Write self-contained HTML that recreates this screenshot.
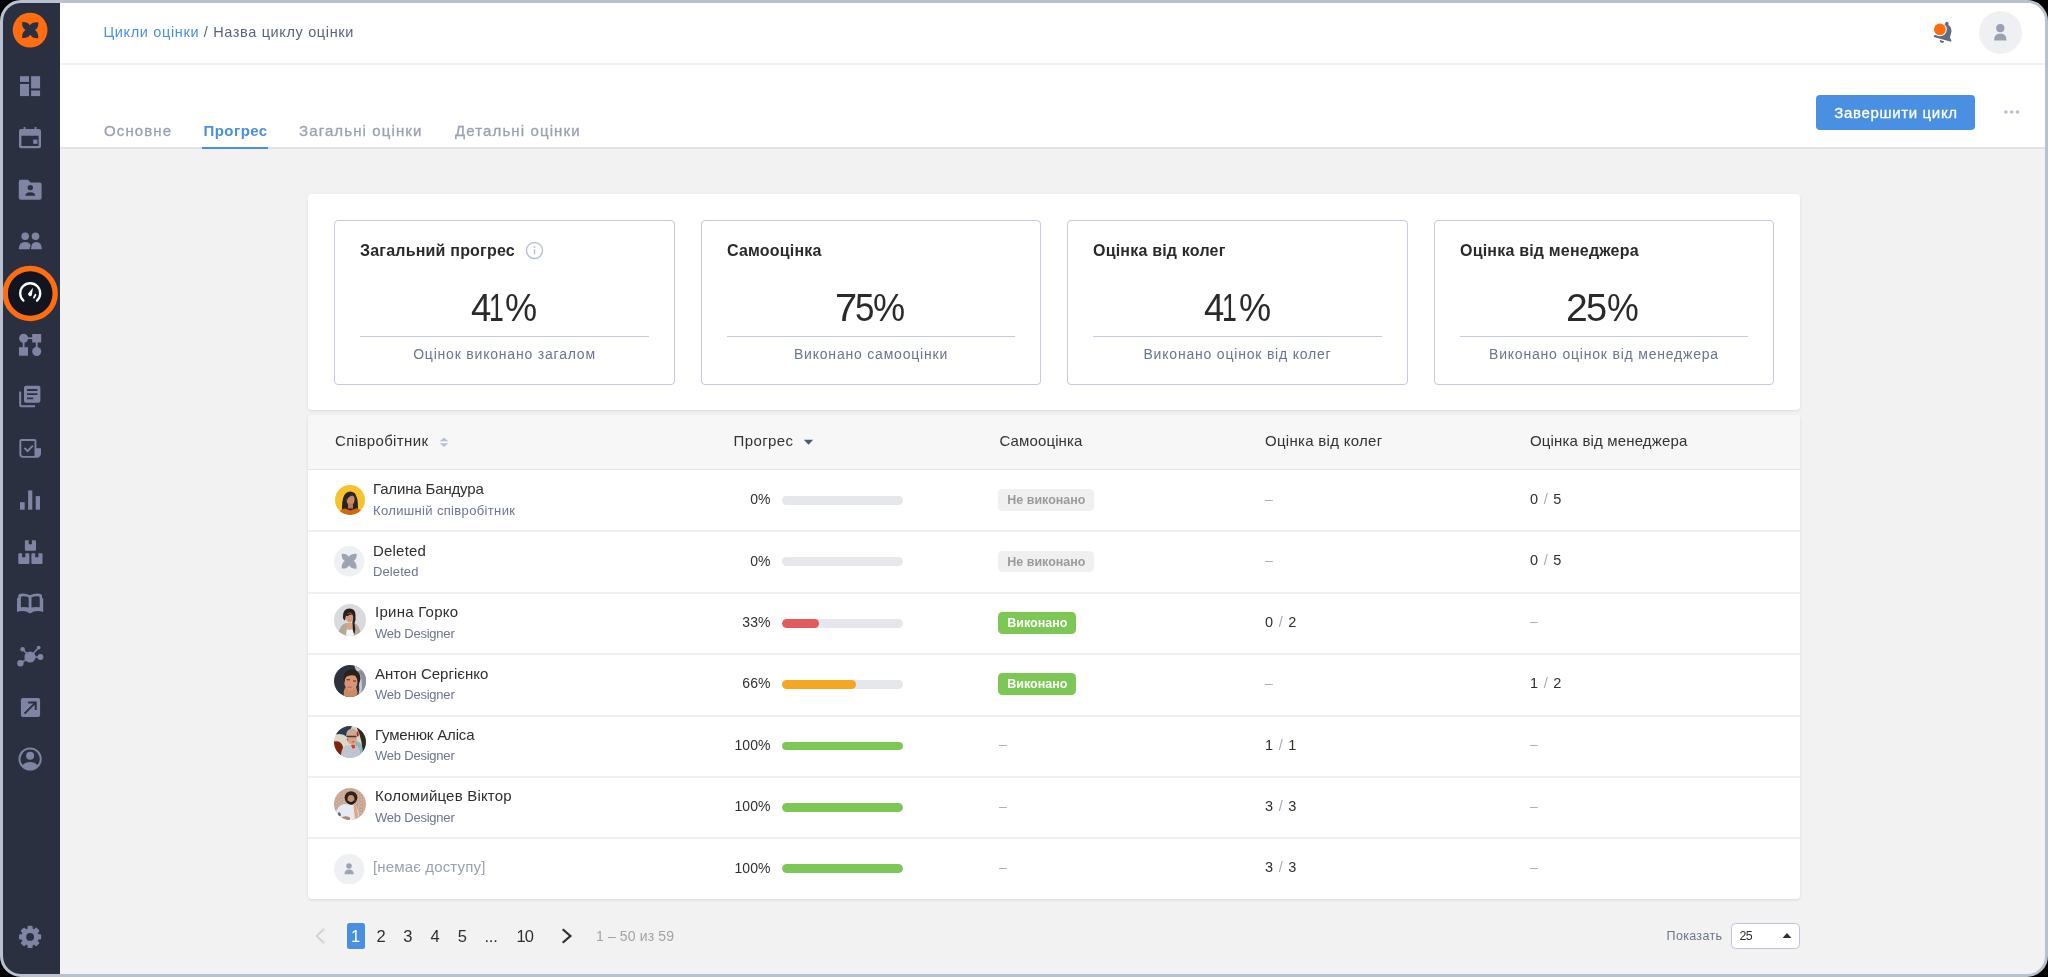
<!DOCTYPE html>
<html lang="uk">
<head>
<meta charset="utf-8">
<title>Цикли оцінки</title>
<style>
*{box-sizing:border-box;margin:0;padding:0}
html,body{width:2048px;height:977px;overflow:hidden;background:#000;font-family:"Liberation Sans",sans-serif;color:#333;}
#frame{position:absolute;left:0;top:0;width:2048px;height:977px;border:3px solid #b9c1d1;border-radius:21px;overflow:hidden;background:#f2f2f2;}
#inner{will-change:transform;position:absolute;left:-3px;top:-3px;width:2048px;height:977px;}
.abs{position:absolute;white-space:nowrap}
#side{position:absolute;left:0;top:0;width:60px;height:977px;background:#2a3040;}
#side svg{position:absolute;left:18px;width:24px;height:24px;fill:#7f84a3}
#top{position:absolute;left:60px;top:0;width:1988px;height:65px;background:#fff;border-bottom:2px solid #eff1f5}
#tabs{position:absolute;left:60px;top:65px;width:1988px;height:84px;background:#fff;border-bottom:2px solid #e4e4e6}
.tab{position:absolute;top:122px;font-size:15px;letter-spacing:1.12px;color:#9aa1b2;white-space:nowrap;line-height:18px;-webkit-text-stroke:.3px #9aa1b2}
.tab.act{color:#4a90e2;font-weight:bold;letter-spacing:.45px;-webkit-text-stroke:0}

#stats{position:absolute;left:308px;top:194px;width:1492px;height:216px;background:#fff;border-radius:4px;box-shadow:0 1px 3px rgba(0,0,0,.10)}
.card{position:absolute;top:220px;width:341px;height:165px;border:1px solid #c3cbdc;border-radius:4px;background:#fff}
.card .t{position:absolute;left:25px;top:20px;font-size:16px;font-weight:bold;color:#2a2a2a;line-height:20px;letter-spacing:.2px;white-space:nowrap}
.card .n{position:absolute;left:0;width:100%;top:65px;text-align:center;font-size:38px;line-height:44px;color:#2a2a2a;letter-spacing:-3.6px;text-indent:-4.5px;transform:scaleX(.935);white-space:nowrap}
.card .l{position:absolute;left:25px;right:25px;top:115px;height:1px;background:#c3cbdc}
.card .s{position:absolute;left:0;width:100%;top:124px;text-align:center;font-size:14px;line-height:18px;color:#6b7590;letter-spacing:.8px;white-space:nowrap}

#tbl{position:absolute;left:308px;top:415px;width:1492px;height:484px;background:#fff;border-radius:4px;box-shadow:0 1px 3px rgba(0,0,0,.10);overflow:hidden}
#thead{position:absolute;left:0;top:0;width:100%;height:55px;background:#f7f7f7;border-bottom:1px solid #e3e5eb}
.th{position:absolute;top:432px;font-size:15px;line-height:18px;color:#333;letter-spacing:.37px;white-space:nowrap}
.rl{position:absolute;left:308px;width:1492px;height:2px;background:#edeff4}
.nm{position:absolute;font-size:15px;line-height:18px;color:#2f2f2f;letter-spacing:-.15px;white-space:nowrap}
.sb{position:absolute;font-size:13px;line-height:16px;color:#6b7590;letter-spacing:.35px;white-space:nowrap}
.pc{position:absolute;left:700px;width:70.4px;text-align:right;font-size:14px;line-height:18px;color:#2f2f2f;white-space:nowrap;margin-top:-.7px}
.bar{position:absolute;left:782.3px;width:120.8px;height:8.8px;border-radius:4.4px;background:#e6e7eb;overflow:hidden;margin-top:-.4px}
.bar i{display:block;height:8.8px;border-radius:4.4px}
.bd{position:absolute;left:998.4px;height:21.8px;border-radius:4.5px;font-size:12.5px;font-weight:bold;line-height:23.2px;margin-top:-.6px;text-align:center;white-space:nowrap}
.bd.no{width:96px;background:#f0f0f0;color:#9b9b9b}
.bd.ok{width:78px;background:#7dc855;color:#fff}
.ds{margin-top:-.8px;position:absolute;font-size:14px;line-height:18px;color:#a9b0c3;white-space:nowrap}
.fr{margin-top:-.8px;position:absolute;font-size:14.5px;line-height:18px;color:#2f2f2f;white-space:nowrap;word-spacing:1.6px}
.fr b{font-weight:normal;color:#a3abc0}
.av{position:absolute;border-radius:50%;overflow:hidden}

.pg{position:absolute;top:926px;font-size:16.5px;line-height:20px;color:#2f2f2f;white-space:nowrap;text-align:center;width:30px;letter-spacing:-.3px}

.g{position:absolute;top:286px;font-size:38px;line-height:44px;color:#2a2a2a;transform-origin:0 50%;white-space:nowrap}
</style>
</head>
<body>
<div id="frame"><div id="inner">

<!-- SIDEBAR -->
<div id="side"></div>

<!-- TOP BAR -->
<div id="top"></div>
<div class="abs" style="left:103.5px;top:23px;font-size:14.5px;line-height:18px;color:#5b657a;letter-spacing:.64px"><span style="color:#4a90e2">Цикли оцінки</span> / Назва циклу оцінки</div>

<!-- TABS -->
<div id="tabs"></div>
<div class="tab" style="left:104px">Основне</div>
<div class="tab act" style="left:203.5px">Прогрес</div>
<div class="tab" style="left:299px">Загальні оцінки</div>
<div class="tab" style="left:455px">Детальні оцінки</div>
<div class="abs" style="left:202px;top:147px;width:66px;height:2px;background:#4a90e2"></div>

<div id="stats"></div>
<div class="card" style="left:334px"><div class="t">Загальний прогрес</div><div class="l"></div><div class="s">Оцінок виконано загалом</div>
<svg style="position:absolute;left:190px;top:20px" width="19" height="19" viewBox="0 0 19 19"><circle cx="9.5" cy="9.5" r="8" fill="none" stroke="#b7c1d6" stroke-width="1.4"/><rect x="8.8" y="8.2" width="1.4" height="5.3" fill="#b7c1d6"/><circle cx="9.5" cy="6" r="0.95" fill="#b7c1d6"/></svg></div>
<div class="card" style="left:701px;width:340px"><div class="t">Самооцінка</div><div class="l"></div><div class="s">Виконано самооцінки</div></div>
<div class="card" style="left:1067px"><div class="t">Оцінка від колег</div><div class="l"></div><div class="s">Виконано оцінок від колег</div></div>
<div class="card" style="left:1434px;width:340px"><div class="t">Оцінка від менеджера</div><div class="l"></div><div class="s">Виконано оцінок від менеджера</div></div>

<span class="g" style="left:470.8px;transform:scaleX(0.96)">4</span><span class="g" style="left:489.3px;transform:scaleX(0.7)">1</span><span class="g" style="left:505.4px;transform:scaleX(0.95)">%</span>
<span class="g" style="left:1203.8px;transform:scaleX(0.96)">4</span><span class="g" style="left:1222.3px;transform:scaleX(0.7)">1</span><span class="g" style="left:1238.5px;transform:scaleX(0.95)">%</span>
<span class="g" style="left:834.6px;transform:scaleX(1.05)">7</span><span class="g" style="left:854.6px;transform:scaleX(0.92)">5</span><span class="g" style="left:872.5px;transform:scaleX(0.95)">%</span>
<span class="g" style="left:1566.4px;transform:scaleX(1.03)">2</span><span class="g" style="left:1586.0px;transform:scaleX(1.0)">5</span><span class="g" style="left:1607.0px;transform:scaleX(0.94)">%</span>
<div id="tbl"><div id="thead"></div></div>
<div class="th" style="left:335px">Співробітник</div><div class="th" style="left:733.6px">Прогрес</div><div class="th" style="left:999.5px;letter-spacing:.12px">Самооцінка</div><div class="th" style="left:1265px;letter-spacing:.29px">Оцінка від колег</div><div class="th" style="left:1530px;letter-spacing:.16px">Оцінка від менеджера</div>
<svg class="abs" style="left:438.9px;top:435px" width="10" height="14" viewBox="0 0 10 14"><path d="M5 2.4 L9.4 6.2 H0.6Z M5 12.1 L0.6 8.3 H9.4Z" fill="#b7c1d6"/></svg>
<svg class="abs" style="left:803.2px;top:438.8px" width="11" height="7" viewBox="0 0 11 7"><path d="M0.8 0.8 H10.2 L5.5 5.8Z" fill="#4a5a78"/></svg>
<div class="rl" style="top:530.4px"></div>
<svg class="abs" style="left:334.5px;top:485.1px" width="30" height="30" viewBox="0 0 30 30"><defs><clipPath id="c0"><circle cx="15" cy="15" r="15"/></clipPath></defs><g clip-path="url(#c0)"><rect width="30" height="30" fill="#f6c22e"/><path d="M7 25 Q6.5 12 11 8 Q15 5 19.5 8 Q23 12 23 22 Q23.5 25 21 26 L9 26Z" fill="#2b2222"/><ellipse cx="15.5" cy="14.6" rx="4.1" ry="5.4" fill="#c98a63"/><path d="M13 18.5 h5 v5 h-5z" fill="#c07a52"/><path d="M11 10.5 Q15 7.5 20 11 Q17 9.5 13.5 12.5 Q12 14 11.5 17Z" fill="#2b2222"/><path d="M3 30 Q4 24.5 10 23.6 L15.5 25.6 L21.5 23.2 Q27 24.5 28 30Z" fill="#cf6a12"/></g></svg>
<div class="nm" style="left:373px;top:480.3px;letter-spacing:-0.15px">Галина Бандура</div><div class="sb" style="left:373px;top:502.8px">Колишній співробітник</div>
<div class="pc" style="top:490.8px">0%</div><div class="bar" style="top:496.3px"></div>
<div class="bd no" style="top:489.8px">Не виконано</div><div class="ds" style="left:1265px;top:490.3px">–</div><div class="fr" style="left:1530px;top:490.8px">0 <b>/</b> 5</div>
<div class="rl" style="top:591.8px"></div>
<svg class="abs" style="left:334.3px;top:546.3px" width="30.4" height="30.4" viewBox="0 0 30.4 30.4"><circle cx="15.2" cy="15.2" r="15.2" fill="#eef0f4"/><g transform="translate(15.2,15.2) scale(0.93) translate(-30.2,-30.2)"><path d="M22.2 22.1 Q27.6 21.7 29.8 25.3 Q32 21.7 38.3 22.2 Q38.7 27.6 35 30.1 Q38.7 32.6 38.2 38.3 Q32.6 38.7 30.2 34.8 Q27.6 38.7 22.1 38 Q21.7 32.6 25.4 30.1 Q21.7 27.6 22.2 22.1Z" fill="#9ca3b3"/></g></svg>
<div class="nm" style="left:373px;top:541.7px;letter-spacing:0.2px">Deleted</div><div class="sb" style="left:373px;top:564.2px;letter-spacing:.1px">Deleted</div>
<div class="pc" style="top:552.2px">0%</div><div class="bar" style="top:557.7px"></div>
<div class="bd no" style="top:551.2px">Не виконано</div><div class="ds" style="left:1265px;top:551.7px">–</div><div class="fr" style="left:1530px;top:552.2px">0 <b>/</b> 5</div>
<div class="rl" style="top:653.2px"></div>
<svg class="abs" style="left:334px;top:603.5px" width="32" height="32" viewBox="0 0 32 32"><defs><clipPath id="c2"><circle cx="16" cy="16" r="16"/></clipPath></defs><g clip-path="url(#c2)"><rect width="32" height="32" fill="#d9dadc"/><path d="M4 32 Q5 21 12 19 L20 19 Q26 21 27 32Z" fill="#b5a898"/><path d="M12 32 Q12 24 15.5 23 Q19.5 24 20 32Z" fill="#f4f4f6"/><path d="M13 19 h5 v6 q-2.5 2 -5 0z" fill="#d9a582"/><path d="M9 12 Q9 5 15.5 4.6 Q21.5 5 21.5 11 Q22 16 20.5 19 Q22 25 20.5 30 Q18.5 28 18.8 22 Q18 18 19 14 L12 11 Q11.5 15 11 16.5 Q8.5 15 9 12Z" fill="#26201e"/><ellipse cx="15.6" cy="13.6" rx="3.6" ry="4.8" fill="#d49a76"/><path d="M11.5 11.5 Q15 7.5 19.6 11 Q16 9.8 13.5 12.2Z" fill="#26201e"/></g></svg>
<div class="nm" style="left:375px;top:603.1px;letter-spacing:0.25px">Ірина Горко</div><div class="sb" style="left:375px;top:625.6px;letter-spacing:-.22px">Web Designer</div>
<div class="pc" style="top:613.6px">33%</div><div class="bar" style="top:619.1px"><i style="width:36.9px;background:#e25a5c"></i></div>
<div class="bd ok" style="top:612.6px">Виконано</div><div class="fr" style="left:1265px;top:613.6px">0 <b>/</b> 2</div><div class="ds" style="left:1530px;top:613.1px">–</div>
<div class="rl" style="top:714.6px"></div>
<svg class="abs" style="left:334px;top:664.7px" width="32" height="32" viewBox="0 0 32 32"><defs><clipPath id="c3"><circle cx="16" cy="16" r="16"/></clipPath></defs><g clip-path="url(#c3)"><rect width="32" height="32" fill="#2e323e"/><path d="M20 0 H32 V32 H24 Q28 18 20 0Z" fill="#c9ccd4"/><path d="M24 6 Q30 14 27 30 L32 30 V4Z" fill="#8a90a0"/><path d="M10 32 Q9 24 12 22 L22 22 Q24 26 23 32Z" fill="#c98a66"/><ellipse cx="16.8" cy="17" rx="6.6" ry="8.6" fill="#d9956f"/><path d="M9.5 15.5 Q8 6 17 4.5 Q26 4 26.5 13 Q26 18 24 20 Q24.5 13 21 10.5 Q15 9.5 12 12 Q10.5 14 10.8 18Z" fill="#2a201c"/><path d="M13.5 21.6 h4.2 v1.5 h-4.2z" fill="#d9636a"/><path d="M12.5 14.2 h3.4 v1.1 h-3.4z M19 15.4 h3 v1.1 h-3z" fill="#4a3028"/></g></svg>
<div class="nm" style="left:375px;top:664.5px;letter-spacing:0.02px">Антон Сергієнко</div><div class="sb" style="left:375px;top:687.0px;letter-spacing:-.22px">Web Designer</div>
<div class="pc" style="top:675.0px">66%</div><div class="bar" style="top:680.5px"><i style="width:73.6px;background:#f5a623"></i></div>
<div class="bd ok" style="top:674.0px">Виконано</div><div class="ds" style="left:1265px;top:674.5px">–</div><div class="fr" style="left:1530px;top:675.0px">1 <b>/</b> 2</div>
<div class="rl" style="top:776.0px"></div>
<svg class="abs" style="left:333.9px;top:726px" width="32" height="32" viewBox="0 0 32 32"><defs><clipPath id="c4"><circle cx="16" cy="16" r="16"/></clipPath></defs><g clip-path="url(#c4)"><rect width="32" height="32" fill="#d8d9c6"/><path d="M0 0 H18 L13 11 Q8 6 0 9Z" fill="#2f3b55"/><path d="M0 15.5 Q7 14 9 21 Q9 27 6 32 H0Z" fill="#7c240e"/><path d="M22 0 H32 V32 H28 Q30 16 22 0Z" fill="#2b2b24"/><path d="M21 15 Q27 15 28.5 22 V30 H22Z" fill="#91b6ba"/><path d="M7 32 Q6.5 22 12 19.5 L21 19 Q27 21 26.5 32Z" fill="#bfc5d0"/><ellipse cx="18" cy="12.6" rx="4.9" ry="6" fill="#d8a283"/><path d="M12.2 10.2 Q12 3 18.5 2.6 Q24 3 23.2 9.4 Q18 7.4 12.2 10.2Z" fill="#cdab93"/><path d="M23 5 q2.2 1.5 1.6 5.4 q-2 .8 -2 -2.4z" fill="#c0271c"/><path d="M13 9.8 h9.5 v1.4 h-9.5z" fill="#3a3a40"/><circle cx="13.6" cy="13.6" r="0.9" fill="#e23b2a"/><path d="M17 19 l3.6 -.6 l.6 3.4 l-2.6 1z" fill="#d93a28"/><path d="M17.8 15.4 h2.6 v.9 h-2.6z" fill="#d4322e"/></g></svg>
<div class="nm" style="left:375px;top:725.9px;letter-spacing:-0.15px">Гуменюк Аліса</div><div class="sb" style="left:375px;top:748.4px;letter-spacing:-.22px">Web Designer</div>
<div class="pc" style="top:736.4px">100%</div><div class="bar" style="top:741.9px"><i style="width:100%;background:#7dc855"></i></div>
<div class="ds" style="left:999px;top:735.9px">–</div><div class="fr" style="left:1265px;top:736.4px">1 <b>/</b> 1</div><div class="ds" style="left:1530px;top:735.9px">–</div>
<div class="rl" style="top:837.4px"></div>
<svg class="abs" style="left:333.9px;top:787.5px" width="32" height="32" viewBox="0 0 32 32"><defs><clipPath id="c5"><circle cx="16" cy="16" r="16"/></clipPath><pattern id="bk" width="5" height="3.2" patternUnits="userSpaceOnUse"><rect width="5" height="3.2" fill="#d6c7ba"/><rect x=".3" y=".3" width="4" height="1.1" fill="#b98f74"/><rect x="2.6" y="1.9" width="4" height="1.1" fill="#c09a80"/><rect x="-2.4" y="1.9" width="4" height="1.1" fill="#c09a80"/></pattern></defs><g clip-path="url(#c5)"><rect width="32" height="32" fill="url(#bk)"/><path d="M1 32 Q1 18 10 16 L20 17 Q25 19 25 32Z" fill="#e6eaf2"/><path d="M19.5 17 Q20 13 21.8 11.5 Q23 14 22 18 Q24 24 24.6 30 L21 31 Q20 24 19.5 17Z" fill="#dba886"/><circle cx="17" cy="9.6" r="6.4" fill="#2e221c"/><ellipse cx="17" cy="11.4" rx="3.4" ry="4.4" fill="#c98f6a"/><path d="M13.4 12.6 Q17 14.6 20.4 12.2 Q20.6 16.6 17 16.8 Q13.4 16.6 13.4 12.6Z" fill="#1f1a1a"/><path d="M15 13.2 q2 1.2 4 0 q-2 .3 -4 0z" fill="#f0ece8"/><path d="M4 25 q2 -2 3 2 q-1 3 -3 1z" fill="#5a6478"/><path d="M8 29 q4 -1.6 8 .4 v2.6 h-8z" fill="#b08a70"/></g></svg>
<div class="nm" style="left:375px;top:787.3px;letter-spacing:0.2px">Коломийцев Віктор</div><div class="sb" style="left:375px;top:809.8px;letter-spacing:-.22px">Web Designer</div>
<div class="pc" style="top:797.8px">100%</div><div class="bar" style="top:803.3px"><i style="width:100%;background:#7dc855"></i></div>
<div class="ds" style="left:999px;top:797.3px">–</div><div class="fr" style="left:1265px;top:797.8px">3 <b>/</b> 3</div><div class="ds" style="left:1530px;top:797.3px">–</div>
<svg class="abs" style="left:334.3px;top:853.5px" width="30.4" height="30.4" viewBox="0 0 30.4 30.4"><circle cx="15.2" cy="15.2" r="15.2" fill="#eef0f4"/><circle cx="15" cy="11.9" r="2.75" fill="#9ca3b3"/><path d="M10.5 20.3 q0 -4.8 4.6 -4.8 q4.6 0 4.6 4.8z" fill="#9ca3b3"/></svg>
<div class="nm" style="left:373px;top:857.7px;color:#9aa1b2;letter-spacing:0.15px">[немає доступу]</div>
<div class="pc" style="top:859.2px">100%</div><div class="bar" style="top:864.7px"><i style="width:100%;background:#7dc855"></i></div>
<div class="ds" style="left:999px;top:858.7px">–</div><div class="fr" style="left:1265px;top:859.2px">3 <b>/</b> 3</div><div class="ds" style="left:1530px;top:858.7px">–</div>

<svg class="abs" style="left:312px;top:926px" width="16" height="20" viewBox="0 0 16 20"><path d="M12.2 2.8 L4.6 10 L12.2 17.2" fill="none" stroke="#d2d2d2" stroke-width="1.9"/></svg>
<div class="abs" style="left:347px;top:923px;width:17.5px;height:25.5px;background:#4a90e2;border-radius:2.5px"></div>
<div class="pg" style="left:340.5px;color:#fff">1</div>
<div class="pg" style="left:366px">2</div>
<div class="pg" style="left:392.6px">3</div>
<div class="pg" style="left:420px">4</div>
<div class="pg" style="left:447.2px">5</div>
<div class="pg" style="left:476px">...</div>
<div class="pg" style="left:509.8px;letter-spacing:-.9px">10</div>
<svg class="abs" style="left:559px;top:926px" width="16" height="20" viewBox="0 0 16 20"><path d="M3.7 3.2 L11.4 10 L3.7 16.8" fill="none" stroke="#2f2f2f" stroke-width="2.2"/></svg>
<div class="abs" style="left:596px;top:927px;font-size:14px;line-height:18px;color:#a3a3a3;letter-spacing:.13px">1 – 50 из 59</div>
<div class="abs" style="left:1666.6px;top:926.7px;font-size:12.5px;line-height:18px;color:#6b7590;letter-spacing:.32px">Показать</div>
<div class="abs" style="left:1731px;top:923px;width:69px;height:26px;background:#fff;border:1px solid #bcc5d8;border-radius:4.5px"></div>
<div class="abs" style="left:1739.5px;top:926.8px;font-size:12.4px;line-height:18px;color:#2f2f2f;letter-spacing:-.55px">25</div>
<svg class="abs" style="left:1782.1px;top:932.4px" width="10" height="7" viewBox="0 0 10 7"><path d="M0.6 5.9 L5 1 L9.4 5.9Z" fill="#2f2f2f"/></svg>
<div class="abs" style="left:1979px;top:11px;width:43px;height:43px;border-radius:50%;background:#eef0f4"></div>
<svg class="abs" style="left:1979px;top:11px" width="43" height="43" viewBox="0 0 43 43"><circle cx="21.3" cy="17.2" r="4.1" fill="#9aa1b2"/><path d="M15 29.4 q0 -7 6.3 -7 q6.3 0 6.3 7z" fill="#9aa1b2"/></svg>
<svg class="abs" style="left:1925px;top:15px" width="35" height="35" viewBox="1925 15 35 35"><g transform="translate(1944.6,31.6) rotate(16)" fill="#626c82"><circle cx="0" cy="-8.3" r="1.8"/><path d="M-1.6 -7.6 Q-6.7 -6 -6.7 0 V4.2 L-9 6.6 V8.1 H9 V6.6 L6.7 4.2 V0 Q6.7 -6 1.6 -7.6Z"/><path d="M-2.3 9.3 h4.6 a2.3 2.3 0 0 1 -4.6 0z"/></g><circle cx="1939.9" cy="29.3" r="6.9" fill="#fff"/><circle cx="1939.9" cy="29.3" r="5.9" fill="#ff6d10"/></svg>
<div class="abs" style="left:1816px;top:95px;width:159px;height:35px;background:#4a90e2;border-radius:4px;color:#fff;font-size:15px;line-height:35px;text-align:center;letter-spacing:.66px;-webkit-text-stroke:.3px #fff;text-indent:1px">Завершити цикл</div>
<svg class="abs" style="left:2002px;top:108px" width="20" height="8" viewBox="0 0 20 8"><circle cx="3.9" cy="4" r="1.8" fill="#b7c1d6"/><circle cx="9.7" cy="4" r="1.8" fill="#b7c1d6"/><circle cx="15.5" cy="4" r="1.8" fill="#b7c1d6"/></svg>

<svg class="abs" style="left:0;top:0" width="60" height="977" viewBox="0 0 60 977">
<!-- logo -->
<circle cx="30.1" cy="30.1" r="17.4" fill="#ff6d10"/>
<path d="M22.2 22.1 Q27.6 21.7 29.8 25.3 Q32 21.7 38.3 22.2 Q38.7 27.6 35 30.1 Q38.7 32.6 38.2 38.3 Q32.6 38.7 30.2 34.8 Q27.6 38.7 22.1 38 Q21.7 32.6 25.4 30.1 Q21.7 27.6 22.2 22.1Z" fill="#2a3040"/>
<g fill="#7f84a3">
<!-- dashboard -->
<rect x="20" y="76.2" width="9" height="5.7"/><rect x="20" y="84" width="9" height="12.1"/><rect x="31.1" y="76.2" width="9" height="12.2"/><rect x="31.1" y="90.5" width="9" height="5.6"/>
<!-- calendar -->
<path d="M23.6 127 h1.8 v2 h9.2 v-2 h1.8 v2 h2.6 a2 2 0 0 1 2 2 v15.2 a2 2 0 0 1 -2 2 h-18 a2 2 0 0 1 -2 -2 v-15.2 a2 2 0 0 1 2 -2 h2.6z M21.4 135.8 v10.2 h17.2 v-10.2z" fill-rule="evenodd"/>
<rect x="33.2" y="139.6" width="4.2" height="4.2"/>
<!-- folder person -->
<path d="M20.8 179.7 h7.2 l2.6 2.9 h9 a2 2 0 0 1 2 2 v13.2 a2 2 0 0 1 -2 2 h-18.8 a2 2 0 0 1 -2 -2 v-16.1 a2 2 0 0 1 2 -2z"/>
<circle cx="30.3" cy="187.6" r="2.7" fill="#2a3040"/><path d="M25.4 195.8 q0 -3.6 4.9 -3.6 q4.9 0 4.9 3.6z" fill="#2a3040"/>
<!-- people -->
<circle cx="25.2" cy="236.3" r="3.8"/><circle cx="35.5" cy="236.3" r="3.8"/>
<path d="M18.8 249.3 q0 -7.4 6.4 -7.4 q4.4 0 5.6 3.6 q-1.2 1.6 -1.2 3.8z"/><path d="M31 249.3 q0 -7.4 5.2 -7.4 q5.6 0 5.6 7.4z"/>
<!-- workflow -->
<circle cx="23.6" cy="338.2" r="4.5"/><rect x="32.2" y="334" width="9" height="8.5"/><rect x="19" y="347.2" width="9" height="8.5"/><circle cx="36.7" cy="351.5" r="4.5"/>
<rect x="23.6" y="337.3" width="10" height="1.8"/><rect x="22.7" y="338" width="1.8" height="10"/><rect x="35.8" y="342" width="1.8" height="6"/>
<!-- docs -->
<path d="M26 385.8 h12.4 a2 2 0 0 1 2 2 v13 a2 2 0 0 1 -2 2 h-12.4 a2 2 0 0 1 -2 -2 v-13 a2 2 0 0 1 2 -2z M27 389 v1.9 h10.4 v-1.9z M27 393.2 v1.9 h10.4 v-1.9z M27 397.4 v1.9 h6.2 v-1.9z" fill-rule="evenodd"/>
<path d="M19.2 391.6 h2 v13.6 h13.8 v2 h-13.8 a2 2 0 0 1 -2 -2z"/>
<!-- check doc -->
<path d="M21.4 439 h13 a2 2 0 0 1 2 2 v7.2 h4.6 v5.4 a4.2 4.2 0 0 1 -4.2 4.2 h-13.6 a3.8 3.8 0 0 1 -3.8 -3.8 v-13 a2 2 0 0 1 2 -2z M21.3 440.9 v13.1 a1.9 1.9 0 0 0 1.9 1.9 h11.3 v-15z" fill-rule="evenodd"/>
<path d="M23.8 448.6 l1.3 -1.3 l2.5 2.5 l4.6 -4.8 l1.3 1.3 l-5.9 6.1z"/>
<!-- bars -->
<rect x="20" y="502.2" width="4.7" height="7.5"/><rect x="28.1" y="490.4" width="4.2" height="19.3"/><rect x="35.7" y="496.1" width="4.3" height="13.6"/>
<!-- boxes -->
<path d="M25.9 540.2 h2.8 v4 h3.2 v-4 h3.1 a1 1 0 0 1 1 1 v8.6 a1 1 0 0 1 -1 1 h-9.1 a1 1 0 0 1 -1 -1 v-8.6 a1 1 0 0 1 1 -1z"/>
<path d="M19.3 553.3 h2.8 v4 h3.2 v-4 h3.1 a1 1 0 0 1 1 1 v8.7 a1 1 0 0 1 -1 1 h-9.1 a1 1 0 0 1 -1 -1 v-8.7 a1 1 0 0 1 1 -1z"/>
<path d="M32.4 553.3 h2.8 v4 h3.2 v-4 h3.1 a1 1 0 0 1 1 1 v8.7 a1 1 0 0 1 -1 1 h-9.1 a1 1 0 0 1 -1 -1 v-8.7 a1 1 0 0 1 1 -1z"/>
<!-- network -->
<circle cx="30" cy="657" r="5.6"/><circle cx="22.6" cy="649.3" r="2.3"/><circle cx="38.7" cy="647.6" r="1.9"/><circle cx="40.4" cy="657" r="3"/><circle cx="20.4" cy="663.3" r="3.2"/>
<!-- arrow box -->
<path d="M22.9 697.9 h15.2 a2 2 0 0 1 2 2 v15.2 a2 2 0 0 1 -2 2 h-15.2 a2 2 0 0 1 -2 -2 v-15.2 a2 2 0 0 1 2 -2z M28.2 701.4 v2 h5.1 l-9.5 9.5 l1.4 1.4 l9.5 -9.5 v5.1 h2 v-8.5z" fill-rule="evenodd"/>
<!-- user circle -->
<path d="M30.1 747.4 a11.6 11.6 0 1 0 0 23.2 a11.6 11.6 0 1 0 0 -23.2z M30.1 749.5 a9.5 9.5 0 0 1 7.4 15.5 q-2.6 -2.9 -7.4 -2.9 q-4.8 0 -7.4 2.9 a9.5 9.5 0 0 1 7.4 -15.5z" fill-rule="evenodd"/>
<circle cx="30.1" cy="755.8" r="4"/>
</g>
<g stroke="#7f84a3" stroke-width="1.5" fill="none">
<path d="M30 657 L22.6 649.3 M30 657 L38.7 647.6 M30 657 H40.4 M30 657 L20.4 663.3"/>
<!-- book -->
<path d="M30 595.3 Q25 592.9 19.6 593.9 Q18.3 594.3 18.2 595.8 V598 L17 598.2 V612 Q24 609.7 30 613.4 Q36 609.7 43.2 612 V598.2 L42 598 V595.8 Q41.9 594.3 40.6 593.9 Q35 592.9 30 595.3Z M20.9 597.7 Q21 596.5 22.4 596.3 Q26 596 28.7 597.4 V607.6 Q25 606.5 20.9 607.2Z M31.5 597.4 Q34.4 596 38.2 596.3 Q39.6 596.5 39.7 597.7 V607.2 Q35.4 606.5 31.5 607.6Z" fill="#7f84a3" stroke="none" fill-rule="evenodd"/>
</g>
<!-- active gauge -->
<circle cx="30.2" cy="293.5" r="25" fill="#12141f" stroke="#ff6d10" stroke-width="5.4"/>
<path d="M23.4 300.6 A10 10 0 1 1 37 300.6" fill="none" stroke="#fff" stroke-width="2.3" stroke-linecap="round"/>
<path d="M33 287.8 L31.8 295.2 A2 2 0 0 1 28.2 293.6Z" fill="#fff"/>
<path d="M35.4 294.8 L34 297.6" stroke="#fff" stroke-width="1.9" stroke-linecap="round"/>
<!-- gear -->
<g transform="translate(30.1,936.9)" fill="#7f84a3">
<circle r="8.7" />
<rect x="-2.6" y="-11.1" width="5.2" height="5" rx="1.1" transform="rotate(0)"/><rect x="-2.6" y="-11.1" width="5.2" height="5" rx="1.1" transform="rotate(45)"/><rect x="-2.6" y="-11.1" width="5.2" height="5" rx="1.1" transform="rotate(90)"/><rect x="-2.6" y="-11.1" width="5.2" height="5" rx="1.1" transform="rotate(135)"/><rect x="-2.6" y="-11.1" width="5.2" height="5" rx="1.1" transform="rotate(180)"/><rect x="-2.6" y="-11.1" width="5.2" height="5" rx="1.1" transform="rotate(225)"/><rect x="-2.6" y="-11.1" width="5.2" height="5" rx="1.1" transform="rotate(270)"/><rect x="-2.6" y="-11.1" width="5.2" height="5" rx="1.1" transform="rotate(315)"/>
<circle r="3.9" fill="#2a3040"/>
</g>
</svg>


</div></div>
</body>
</html>
